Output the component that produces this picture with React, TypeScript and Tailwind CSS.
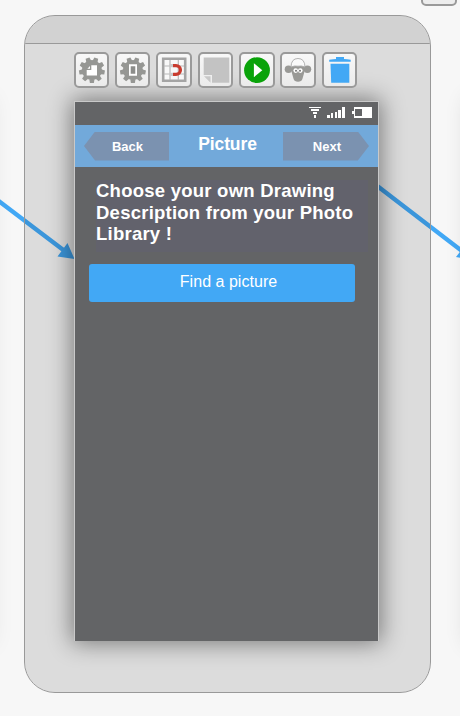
import type { ReactNode } from 'react';

function ToolButton({ children }: { children: ReactNode }) {
  return (
    <button className="h-[36px] w-[35.6px] shrink-0 rounded-[5px] border-2 border-[#9a9a9a] bg-linear-to-b from-[#f8f8f8] to-[#ebebeb]">
      <svg viewBox="0 0 32 32" className="block h-[32px] w-[32px]">{children}</svg>
    </button>
  );
}

function Gear() {
  return (
    <g fill="#969794" transform="translate(15.9 16.2)">
      <circle r="10.1" />
      {[20, 60, 100, 140, 180, 220, 260, 300, 340].map((a) => (
        <path key={a} d="M-2.6 -9L-2 -12.9H2L2.6 -9Z" transform={`rotate(${a})`} />
      ))}
    </g>
  );
}

function Toolbar() {
  return (
    <div className="ml-[48.5px] mt-[8px] flex gap-[5.8px]">
      <ToolButton>
        <Gear />
        <path d="M15.3 11.3H21V21.6H10.7V16H15.3Z" fill="#fff" />
        <path d="M14 12V14.7H11.4Z" fill="#fff" />
      </ToolButton>
      <ToolButton>
        <Gear />
        <path d="M12 10.3H20V21.8H12Z" fill="#fff" />
        <path d="M13.7 12.3H18.3V19.7H13.7Z" fill="#8c8d8a" />
      </ToolButton>
      <ToolButton>
        <path d="M5.2 4.8H27.2V26.8H5.2Z" fill="#f8f8f8" stroke="#a4a4a4" strokeWidth="2.6" />
        <path d="M12 6V26M20.3 6V26M6 12H26M6 20H26" stroke="#b8b8b8" strokeWidth="1.2" />
        <path d="M15 11.6H18A4.4 4.4 0 0 1 18 20.4H15" fill="none" stroke="#c93b2e" strokeWidth="3.3" />
        <path d="M11.5 9.9H15V13.3H11.5ZM11.5 18.7H15V22.1H11.5Z" fill="#c9c9c9" />
      </ToolButton>
      <ToolButton>
        <path d="M3.7 3.5H29.3V28.8H12V21H3.7Z" fill="#c3c3c3" />
        <path d="M4 22.3H10.5V28.8Z" fill="#c8c8c8" />
      </ToolButton>
      <ToolButton>
        <circle cx="16" cy="16.2" r="12.9" fill="#0aa30a" />
        <path d="M12.9 9.2L21.3 16.2L12.9 23.2Z" fill="#fff" />
      </ToolButton>
      <ToolButton>
        <ellipse cx="6.5" cy="15.3" rx="3.8" ry="3.7" fill="#999996" />
        <ellipse cx="25.4" cy="15.3" rx="3.8" ry="3.7" fill="#999996" />
        <path d="M9.6 12H22.4V18L20.4 25Q19.6 27.8 16 27.8Q12.4 27.8 11.6 25L9.6 18Z" fill="#999996" />
        <path d="M9 13Q9.2 4.5 16 4.5Q22.8 4.5 23 13Q19.5 11.4 16 12.2Q12.5 11.4 9 13Z" fill="#fafafa" stroke="#aaa" strokeWidth="0.9" />
        <circle cx="13.7" cy="16.6" r="2.3" fill="#fff" />
        <circle cx="18.3" cy="16.6" r="2.3" fill="#fff" />
        <circle cx="14" cy="16.7" r="1" fill="#777" />
        <circle cx="18" cy="16.7" r="1" fill="#777" />
      </ToolButton>
      <ToolButton>
        <path d="M6.5 9.7H25.3V28.8H7.2Z" fill="#42a8f5" />
        <path d="M5.2 5.8Q10 5 12 5V3H20V5Q23 5 26.7 5.8V7.8H5.2Z" fill="#42a8f5" />
      </ToolButton>
    </div>
  );
}

function StatusBar() {
  return (
    <div className="flex h-[23px] justify-end">
      <svg viewBox="0 0 70 23" className="h-[23px] w-[70px]" fill="#fff" shapeRendering="crispEdges">
        <path d="M1 5H13V6H1ZM3 7H11V9H3ZM5 10H9V12H5ZM6 13H8V16H6Z" />
        <path d="M19 13H22V16H19ZM23 11H25V16H23ZM27 10H29V16H27ZM30 8H33V16H30ZM34 5H37V16H34Z" />
        <path fillRule="evenodd" d="M46 5H64V16H46V12H44V9H46ZM47 7V14H54V7Z" />
      </svg>
    </div>
  );
}

function NavBar() {
  return (
    <div className="flex h-[42px] items-center bg-[#72a9da] font-bold text-white">
      <button className="ml-[9px] h-[29px] w-[85px] bg-[#7b92b0] pl-[2px] text-[13px] leading-[29px] [clip-path:polygon(0_50%,13%_0,100%_0,100%_100%,13%_100%)]">
        Back
      </button>
      <h1 className="w-[114px] pb-[4px] pl-[3px] text-center text-[17.5px] leading-[20px] tracking-[-0.1px]">Picture</h1>
      <button className="h-[29px] w-[86px] bg-[#7b92b0] pl-[2px] text-[13px] leading-[29px] tracking-[0.1px] [clip-path:polygon(0_0,87%_0,100%_50%,87%_100%,0_100%)]">
        Next
      </button>
    </div>
  );
}

function Phone() {
  return (
    <div className="ml-[49px] mt-[13px] h-[540px] w-[305px] border-x border-t border-[#c9c9c9] bg-[#636466] shadow-[0_0_22px_2px_rgba(0,0,0,0.46)]">
      <StatusBar />
      <NavBar />
      <p className="ml-[21px] mt-[13px] h-[72px] w-[272px] whitespace-pre bg-[#62626c] text-[18.5px] leading-[21.5px] font-bold tracking-[0.24px] text-white">
        {'Choose your own Drawing\nDescription from your Photo\nLibrary !'}
      </p>
      <button className="ml-[14px] mt-[12px] block h-[38px] w-[266px] rounded-[3px] bg-[#42a8f5] pl-[13px] pb-[2px] text-[16px] tracking-[0.03px] text-white">
        Find a picture
      </button>
    </div>
  );
}

export default function App() {
  return (
    <main className="relative h-[716px] w-[460px] overflow-hidden bg-[#f7f7f7] font-['Liberation_Sans',Arial,sans-serif]">
      <svg viewBox="0 0 460 716" className="absolute inset-0 h-[716px] w-[460px]" fill="#42a8f5">
        <path d="M-2 200.5L64 250.5M376 185L462 251" stroke="#42a8f5" strokeWidth="4.4" />
        <path d="M74.5 259L67.5 243L57.5 256.5ZM473 260L466 244L456 257Z" />
      </svg>
      <div className="absolute left-[-75px] top-[101px] h-[540px] w-[63px] shadow-[0_0_22px_3px_rgba(0,0,0,0.1)]" />
      <div className="absolute left-[472px] top-[101px] h-[540px] w-[63px] shadow-[0_0_22px_3px_rgba(0,0,0,0.16)]" />
      <div className="absolute left-[421px] top-[-30px] h-[36px] w-[36px] rounded-[5px] border-2 border-[#9a9a9a] bg-[#ededed]" />
      <div className="relative ml-[24px] flex h-[716px] w-[407px] flex-col pt-[15px]">
        <section className="h-[678px] overflow-hidden rounded-[31px] border border-[#999] bg-black/[0.107] bg-clip-padding">
          <div className="-ml-px h-[28px] border-b border-[#999] bg-black/[0.045]" />
          <Toolbar />
          <Phone />
        </section>
      </div>
    </main>
  );
}
